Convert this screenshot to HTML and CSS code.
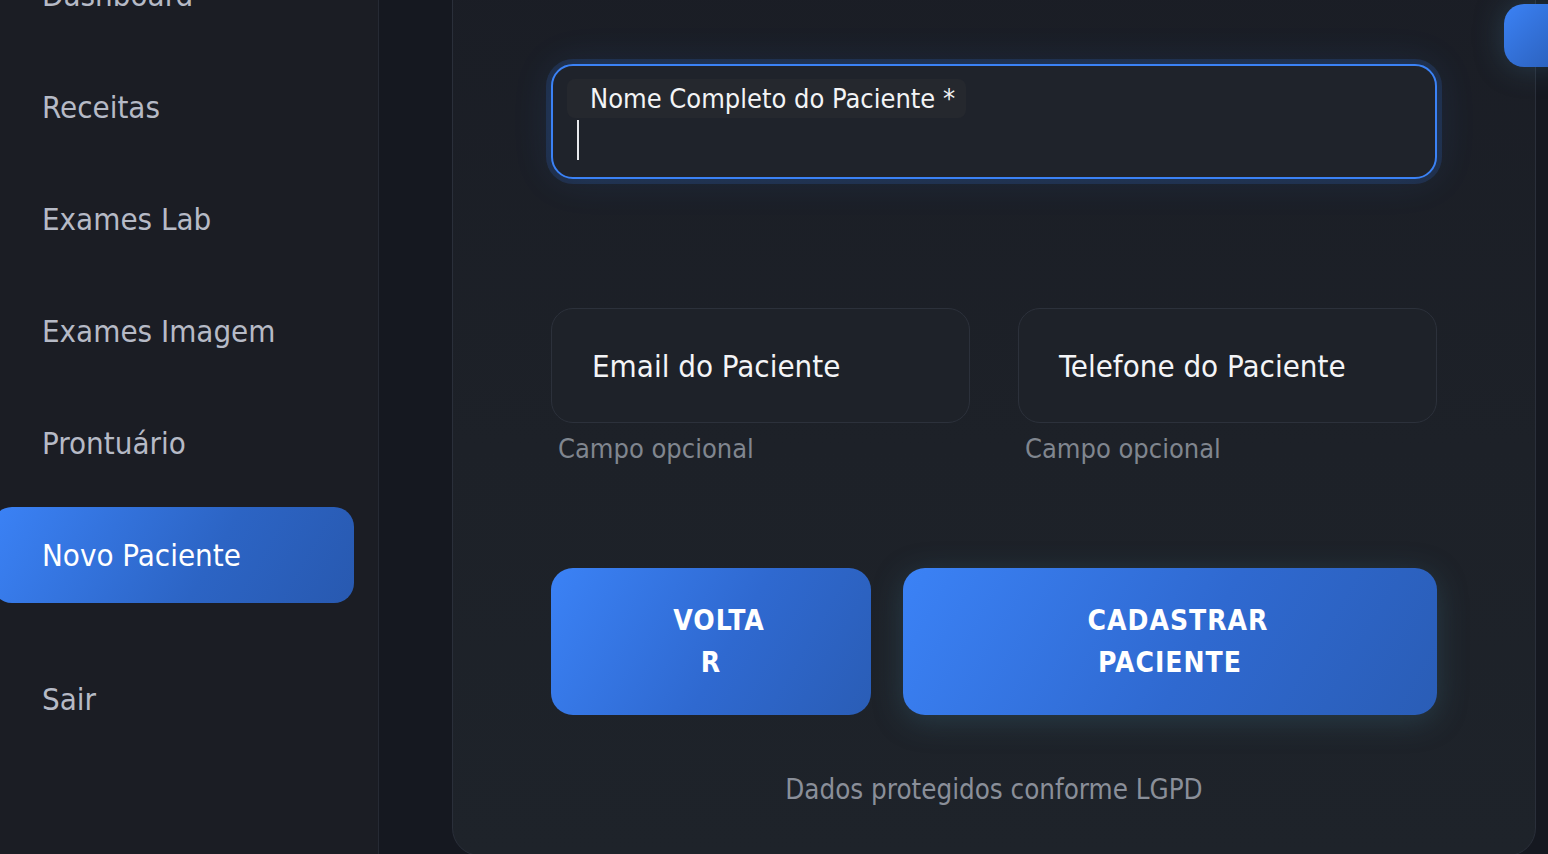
FILE: index.html
```html
<!DOCTYPE html>
<html lang="pt-BR">
<head>
<meta charset="utf-8">
<title>Novo Paciente</title>
<link rel="stylesheet" href="styles.css">
</head>
<body>
<div class="app">
  <aside class="sidebar">
    <nav class="nav">
      <a class="nav-item">Dashboard</a>
      <a class="nav-item">Receitas</a>
      <a class="nav-item">Exames Lab</a>
      <a class="nav-item">Exames Imagem</a>
      <a class="nav-item">Prontuário</a>
      <a class="nav-item active">Novo Paciente</a>
      <a class="nav-item logout">Sair</a>
    </nav>
  </aside>
  <main class="main">
    <section class="card">
      <div class="field field-focused">
        <span class="chip-label">Nome Completo do Paciente *</span>
        <span class="caret"></span>
      </div>
      <div class="row">
        <div class="field-group">
          <div class="field field-plain">Email do Paciente</div>
          <p class="helper">Campo opcional</p>
        </div>
        <div class="field-group">
          <div class="field field-plain">Telefone do Paciente</div>
          <p class="helper">Campo opcional</p>
        </div>
      </div>
      <div class="actions">
        <button class="btn">VOLTAR</button>
        <button class="btn btn-primary">CADASTRAR PACIENTE</button>
      </div>
      <p class="note">Dados protegidos conforme LGPD</p>
    </section>
  </main>
  <button class="fab" aria-label="menu"></button>
</div>
</body>
</html>
```
FILE: styles.css
```css
* { box-sizing: border-box; }
html, body { margin: 0; padding: 0; }
body {
  width: 1548px;
  height: 854px;
  overflow: hidden;
  background: #171a20;
  font-family: "DejaVu Sans Condensed", "DejaVu Sans", sans-serif;
}
.app {
  display: flex;
  height: 960px;
  margin-top: -53px;
}
.sidebar {
  width: 379px;
  flex: none;
  background: #1b1d24;
  border-right: 1px solid #262a34;
  padding-right: 24px;
}
.nav {
  display: flex;
  flex-direction: column;
  gap: 16px;
}
.nav-item {
  display: flex;
  align-items: center;
  height: 96px;
  margin-left: -8px;
  padding-left: 50px;
  border-radius: 20px;
  font-size: 31px;
  color: #b6bac6;
  white-space: nowrap;
}
.nav-item.active {
  color: #ffffff;
  background: linear-gradient(120deg, #3b82f6 0%, #2c64c4 60%, #2859b0 100%);
}
.nav-item.logout { margin-top: 32px; }

.main {
  flex: 1;
  display: flex;
  background: #151820;
  padding-left: 73px;
  padding-right: 12px;
}
.card {
  flex: 1;
  height: 909px;
  border: 1px solid #2a2f3a;
  border-radius: 28px;
  background: linear-gradient(180deg, #1a1d25 0%, #1d2128 55%, #1e232a 100%);
  padding: 116px 98px 0 98px;
}
.field {
  border-radius: 22px;
}
.field-focused {
  height: 115px;
  border: 2px solid #3b82f6;
  background: #1f232b;
  padding: 13px 14px 0 14px;
  box-shadow: 0 0 0 5px rgba(59,130,246,0.16), 0 0 40px rgba(59,130,246,0.12);
}
.chip-label {
  display: inline-block;
  height: 39px;
  line-height: 39px;
  padding: 0 11px 0 23px;
  background: #25282e;
  border-radius: 8px;
  font-size: 27px;
  color: #f3f4f6;
}
.caret {
  display: block;
  width: 2px;
  height: 40px;
  margin: 2px 0 0 10px;
  background: #e8eaee;
}
.row {
  display: grid;
  grid-template-columns: 1fr 1fr;
  gap: 48px;
  margin-top: 129px;
}
.field-plain {
  height: 115px;
  border: 1px solid #2c313b;
  background: #1e2229;
  display: flex;
  align-items: center;
  padding-left: 40px;
  font-size: 31px;
  color: #f4f5f7;
}
.helper {
  margin: 9px 0 0 7px;
  font-size: 27px;
  line-height: 34px;
  color: #80868f;
}
.actions {
  display: grid;
  grid-template-columns: 320px 1fr;
  gap: 32px;
  margin-top: 102px;
}
.btn {
  height: 147px;
  border: 0;
  border-radius: 22px;
  background: linear-gradient(120deg, #3b82f6 0%, #2f69d0 55%, #2a5db6 100%);
  color: #ffffff;
  font-family: inherit;
  font-weight: bold;
  font-size: 28px;
  line-height: 42px;
  letter-spacing: 1px;
  padding: 0 100px;
  text-indent: 16px;
  text-align: center;
  overflow-wrap: anywhere;
}
.btn-primary {
  box-shadow: 0 6px 30px rgba(60,110,130,0.35);
}
.note {
  margin: 57px 0 0 0;
  text-align: center;
  font-size: 27.5px;
  line-height: 34px;
  color: #8a8f99;
}
.fab {
  position: fixed;
  top: 4px;
  left: 1504px;
  width: 64px;
  height: 63px;
  border: 0;
  border-radius: 20px;
  background: linear-gradient(135deg, #3b82f6, #2a5db6);
  box-shadow: 0 0 30px rgba(70,120,150,0.35);
}
```
